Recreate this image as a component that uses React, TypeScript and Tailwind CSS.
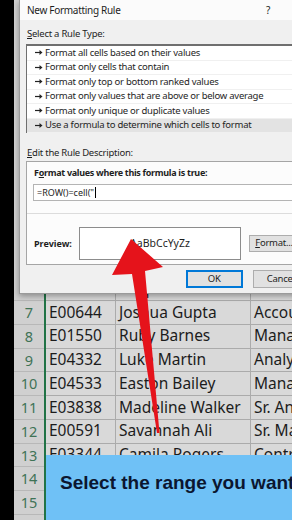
import React from 'react';

const rows = [
    { n: 6, id: 'E02389', name: 'Harper Ford', role: 'Sales' },
    { n: 7, id: 'E00644', name: 'Joshua Gupta', role: 'Accountant' },
    { n: 8, id: 'E01550', name: 'Ruby Barnes', role: 'Manager' },
    { n: 9, id: 'E04332', name: 'Luke Martin', role: 'Analyst' },
    { n: 10, id: 'E04533', name: 'Easton Bailey', role: 'Manager' },
    { n: 11, id: 'E03838', name: 'Madeline Walker', role: 'Sr. Analyst' },
    { n: 12, id: 'E00591', name: 'Savannah Ali', role: 'Sr. Manager' },
    { n: 13, id: 'E03344', name: 'Camila Rogers', role: 'Controller' },
    { n: 14, id: 'E01257', name: 'Aaron Price', role: 'Director' },
    { n: 15, id: 'E02480', name: 'Nora Hayes', role: 'Analyst' },
    { n: 16, id: 'E04100', name: 'Levi Cooper', role: 'Manager' },
];

const ruleTypes = [
    'Format all cells based on their values',
    'Format only cells that contain',
    'Format only top or bottom ranked values',
    'Format only values that are above or below average',
    'Format only unique or duplicate values',
    'Use a formula to determine which cells to format',
];

const Pointer = () => (
    <svg width="8" height="7" viewBox="0 0 8 7" className="shrink-0">
        <path d="M0 3.5 H5" stroke="#222" strokeWidth="1.2" />
        <path d="M4.5 1 L7.5 3.5 L4.5 6 Z" fill="#222" />
    </svg>
);

const App = () => {
    return (
        <div className="relative w-[292px] h-[520px] overflow-hidden bg-black flex" style={{ fontFamily: '"Noto Sans", sans-serif' }}>
            {/* black strip on the left */}
            <div className="w-[14px] shrink-0 bg-black"></div>

            {/* spreadsheet */}
            <div className="relative flex-1 flex flex-col bg-[#d9d9d9]">
                <div className="h-[277.25px] shrink-0 flex">
                    <div className="w-[30px] bg-[#d0d0d0]"></div>
                    <div className="w-[2px] bg-[#217346]"></div>
                    <div className="flex-1 bg-[#d9d9d9]"></div>
                </div>
                {rows.map((r) => (
                    <div key={r.n} className="h-[23.75px] shrink-0 flex text-[15.5px] leading-none text-[#1c1c1c]">
                        <div className="w-[30px] bg-[#d0d0d0] border-b border-[#b8b8b8] flex items-center justify-center text-[#3f7356] text-[14.5px]">
                            {r.n}
                        </div>
                        <div className="w-[2px] bg-[#217346]"></div>
                        <div className="w-[70px] border-b border-r border-[#ababab] flex items-center pl-[3px] whitespace-nowrap overflow-hidden">
                            {r.id}
                        </div>
                        <div className="w-[135px] border-b border-r border-[#ababab] flex items-center pl-[3px] whitespace-nowrap overflow-hidden">
                            {r.name}
                        </div>
                        <div className="flex-1 border-b border-[#ababab] flex items-center pl-[3px] whitespace-nowrap overflow-hidden">
                            {r.role}
                        </div>
                    </div>
                ))}

                {/* dialog */}
                <div className="absolute left-[5px] top-0 w-[290px] h-[294px] bg-[#f0f0f0] border-l border-b border-[#9a9a9a] shadow-[0_2px_6px_rgba(0,0,0,0.35)] flex flex-col text-[9.5px] tracking-[-0.25px] text-[#1e1e1e]">
                    <div className="h-[20px] shrink-0 bg-[#fbfbfb] flex items-center justify-between pl-[7px] pr-[39px] text-[10px] tracking-[-0.3px]">
                        <span>New Formatting Rule</span>
                        <span>?</span>
                    </div>

                    <div className="pl-[7px] mt-[8px] h-[12px] leading-[12px]">
                        <span className="underline">S</span>elect a Rule Type:
                    </div>

                    <div className="ml-[6px] mt-[4px] border-t-2 border-l border-[#6f6f6f] bg-white flex flex-col">
                        {ruleTypes.map((t, i) => (
                            <div key={t} className={`h-[14.5px] flex items-center gap-[2px] pl-[8px] border-b border-[#f0f0f0] whitespace-nowrap ${i === 5 ? 'bg-[#e3e3e3]' : ''}`}>
                                <Pointer />
                                <span>{t}</span>
                            </div>
                        ))}
                    </div>

                    <div className="pl-[7px] mt-[14px] h-[12px] leading-[12px]">
                        <span className="underline">E</span>dit the Rule Description:
                    </div>

                    <div className="ml-[6px] mt-[2px] h-[104px] border border-r-0 border-[#a5a5a5] bg-[#fcfcfc] flex flex-col">
                        <div className="pl-[7px] mt-[5px] h-[12px] leading-[12px] font-bold text-[9px] tracking-[-0.3px]">
                            F<span className="underline">o</span>rmat values where this formula is true:
                        </div>
                        <div className="ml-[6px] mt-[5px] h-[17px] border border-r-0 border-[#b4b4b4] bg-white flex items-center pl-[3px] text-[9px] tracking-normal">
                            <span>=ROW()=cell("</span>
                            <span className="w-px h-[11px] bg-black ml-px"></span>
                        </div>
                        <div className="mt-[12px] border-t border-[#dcdcdc]"></div>
                        <div className="flex items-center mt-[13px]">
                            <span className="w-[52px] pl-[7px] font-bold text-[9px] tracking-normal">Preview:</span>
                            <div className="w-[163px] h-[33px] border border-[#8c8c8c] bg-white flex items-center justify-center text-[10.5px] tracking-normal">
                                AaBbCcYyZz
                            </div>
                            <div className="ml-[8px] h-[17px] w-[60px] border border-[#adadad] bg-[#e1e1e1] flex items-center pl-[5px]">
                                <span className="underline">F</span>ormat...
                            </div>
                        </div>
                    </div>

                    <div className="flex mt-[5px] ml-[166px] gap-[10px]">
                        <div className="w-[58px] h-[18px] border-2 border-[#0078d7] bg-[#e1e1e1] flex items-center justify-center">OK</div>
                        <div className="w-[58px] h-[18px] border border-[#adadad] bg-[#e1e1e1] flex items-center justify-center">Cancel</div>
                    </div>
                </div>

                {/* caption */}
                <div className="absolute left-[32px] top-[455px] w-[260px] h-[70px] bg-[#6fc1f6] flex items-start pt-[17px] pl-[14px] overflow-hidden">
                    <span className="whitespace-nowrap font-bold text-[19px] leading-[22px] text-[#0b1630]" style={{ fontFamily: '"Liberation Sans", Arial, sans-serif' }}>
                        Select the range you want to format
                    </span>
                </div>
            </div>

            {/* red arrow */}
            <svg className="absolute inset-0 pointer-events-none" width="292" height="520" viewBox="0 0 292 520">
                <path d="M131 239 L163 267 L145 271 L159.5 433 L157 433 L132 274 L112 275 Z" fill="#e5131b" />
            </svg>
        </div>
    );
};

export default App;
